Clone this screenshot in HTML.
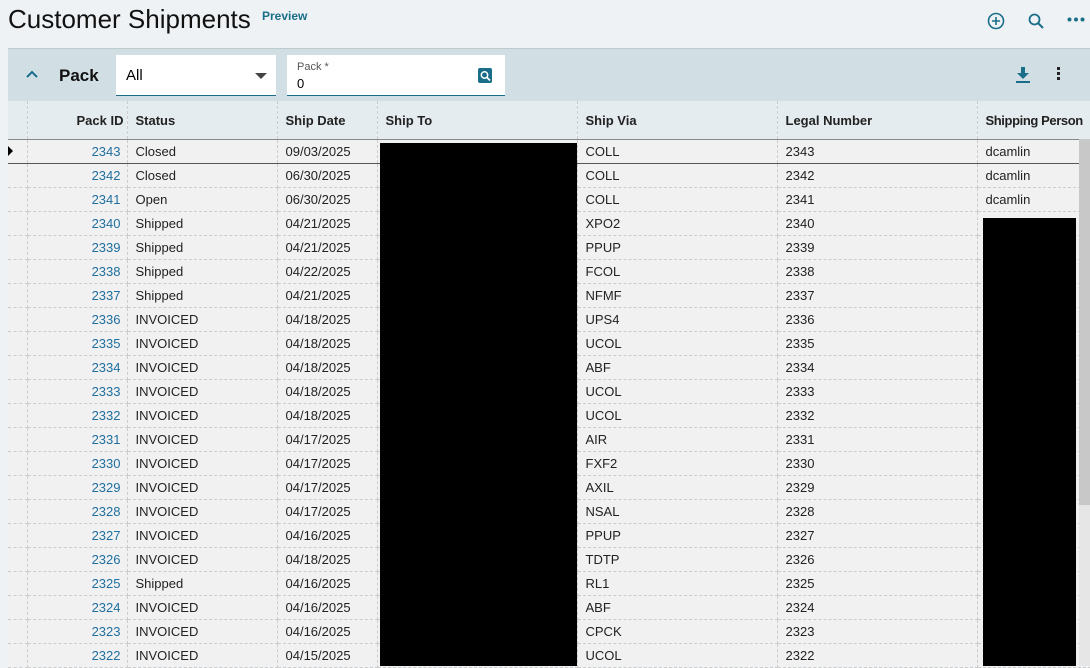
<!DOCTYPE html><html><head><style>
body{margin:0;width:1090px;height:666px;overflow:hidden;background:#eef2f5;font-family:"Liberation Sans",sans-serif;position:relative}
.t{position:absolute;left:8px;top:4px;font-size:26px;color:#111}
.pv{position:absolute;left:262px;top:9px;font-size:12px;font-weight:bold;color:#1a6e8a}
.panel{position:absolute;left:8px;top:48px;width:1082px;height:53px;background:#d1dee3;border-top:1px solid #bcc;}
.in{position:absolute;background:#fff;border-bottom:1px solid #1a6e8a}
table{position:absolute;left:8px;top:101px;width:1082px;border-collapse:collapse;font-size:13px;color:#222;table-layout:fixed}
td,th{height:23px;padding:0 4px 0 8px;white-space:nowrap;overflow:hidden;border-right:1px dashed #ccc;border-bottom:1px dashed #ccc;background:#f1f1f1}
th{height:38px;background:#e4ecef;text-align:left;font-weight:bold;border-bottom:1px solid #888}
td.id{color:#1f6fa0;text-align:right;padding-right:6px}
tr.sel td{border-top:1px solid #555;border-bottom:1px solid #555}
.blk{position:absolute;background:#000}
</style></head><body>
<div class="t">Customer Shipments</div><div class="pv">Preview</div>
<svg style="position:absolute;left:987px;top:12px" width="18" height="18" viewBox="0 0 18 18"><circle cx="9" cy="9" r="7.5" fill="none" stroke="#1a6e8a" stroke-width="1.6"/><path d="M9 5v8M5 9h8" stroke="#1a6e8a" stroke-width="1.6"/></svg>
<svg style="position:absolute;left:1027px;top:12px" width="18" height="18" viewBox="0 0 18 18"><circle cx="7.5" cy="7.5" r="5" fill="none" stroke="#1a6e8a" stroke-width="1.8"/><path d="M11 11l5 5" stroke="#1a6e8a" stroke-width="2"/></svg>
<svg style="position:absolute;left:1067px;top:17px" width="18" height="5"><circle cx="2.5" cy="2.5" r="2" fill="#1a6e8a"/><circle cx="9" cy="2.5" r="2" fill="#1a6e8a"/><circle cx="15.5" cy="2.5" r="2" fill="#1a6e8a"/></svg>
<div class="panel">
<svg style="position:absolute;left:18px;top:20px" width="12" height="10"><path d="M1 8l5-5 5 5" fill="none" stroke="#1a6e8a" stroke-width="2"/></svg>
<div style="position:absolute;left:51px;top:17px;font-size:17px;font-weight:bold;color:#111">Pack</div>
<div class="in" style="left:108px;top:6px;width:160px;height:40px"><span style="position:absolute;left:10px;top:12px;font-size:15px">All</span><svg style="position:absolute;left:139px;top:18px" width="12" height="6"><path d="M0 0h12L6 6z" fill="#444"/></svg></div>
<div class="in" style="left:279px;top:6px;width:218px;height:40px"><span style="position:absolute;left:10px;top:6px;font-size:11px;color:#555">Pack *</span><span style="position:absolute;left:10px;top:21px;font-size:13px">0</span><svg style="position:absolute;left:191px;top:13px" width="14" height="15"><rect width="14" height="15" rx="2" fill="#1a6e8a"/><circle cx="6.5" cy="7" r="3.2" fill="none" stroke="#fff" stroke-width="1.5"/><path d="M9 9.5l3 3" stroke="#fff" stroke-width="1.6"/></svg></div>
<svg style="position:absolute;left:1008px;top:18px" width="14" height="16"><path d="M5 0h4v6h4l-6 6-6-6h4z" fill="#1a6e8a"/><rect y="14" width="14" height="2" fill="#1a6e8a"/></svg>
<div style="position:absolute;left:1049px;top:18px;width:3px"><div style="width:3px;height:3px;background:#222;margin-bottom:2px"></div><div style="width:3px;height:3px;background:#222;margin-bottom:2px"></div><div style="width:3px;height:3px;background:#222"></div></div>
</div>
<table>
<colgroup><col style="width:19px"><col style="width:100px"><col style="width:150px"><col style="width:100px"><col style="width:200px"><col style="width:200px"><col style="width:200px"><col style="width:113px"></colgroup>
<tr><th style="padding:0"></th><th style="text-align:right;padding-right:3px">Pack ID</th><th>Status</th><th>Ship Date</th><th>Ship To</th><th>Ship Via</th><th>Legal Number</th><th style="padding-right:0;letter-spacing:-0.4px">Shipping Person</th></tr>
<tr class="sel"><td style="padding:0"><svg width="6" height="10"><path d="M0 0l5 5-5 5z" fill="#000"/></svg></td><td class="id">2343</td><td>Closed</td><td>09/03/2025</td><td></td><td>COLL</td><td>2343</td><td>dcamlin</td></tr>
<tr><td></td><td class="id">2342</td><td>Closed</td><td>06/30/2025</td><td></td><td>COLL</td><td>2342</td><td>dcamlin</td></tr>
<tr><td></td><td class="id">2341</td><td>Open</td><td>06/30/2025</td><td></td><td>COLL</td><td>2341</td><td>dcamlin</td></tr>
<tr><td></td><td class="id">2340</td><td>Shipped</td><td>04/21/2025</td><td></td><td>XPO2</td><td>2340</td><td></td></tr>
<tr><td></td><td class="id">2339</td><td>Shipped</td><td>04/21/2025</td><td></td><td>PPUP</td><td>2339</td><td></td></tr>
<tr><td></td><td class="id">2338</td><td>Shipped</td><td>04/22/2025</td><td></td><td>FCOL</td><td>2338</td><td></td></tr>
<tr><td></td><td class="id">2337</td><td>Shipped</td><td>04/21/2025</td><td></td><td>NFMF</td><td>2337</td><td></td></tr>
<tr><td></td><td class="id">2336</td><td>INVOICED</td><td>04/18/2025</td><td></td><td>UPS4</td><td>2336</td><td></td></tr>
<tr><td></td><td class="id">2335</td><td>INVOICED</td><td>04/18/2025</td><td></td><td>UCOL</td><td>2335</td><td></td></tr>
<tr><td></td><td class="id">2334</td><td>INVOICED</td><td>04/18/2025</td><td></td><td>ABF</td><td>2334</td><td></td></tr>
<tr><td></td><td class="id">2333</td><td>INVOICED</td><td>04/18/2025</td><td></td><td>UCOL</td><td>2333</td><td></td></tr>
<tr><td></td><td class="id">2332</td><td>INVOICED</td><td>04/18/2025</td><td></td><td>UCOL</td><td>2332</td><td></td></tr>
<tr><td></td><td class="id">2331</td><td>INVOICED</td><td>04/17/2025</td><td></td><td>AIR</td><td>2331</td><td></td></tr>
<tr><td></td><td class="id">2330</td><td>INVOICED</td><td>04/17/2025</td><td></td><td>FXF2</td><td>2330</td><td></td></tr>
<tr><td></td><td class="id">2329</td><td>INVOICED</td><td>04/17/2025</td><td></td><td>AXIL</td><td>2329</td><td></td></tr>
<tr><td></td><td class="id">2328</td><td>INVOICED</td><td>04/17/2025</td><td></td><td>NSAL</td><td>2328</td><td></td></tr>
<tr><td></td><td class="id">2327</td><td>INVOICED</td><td>04/16/2025</td><td></td><td>PPUP</td><td>2327</td><td></td></tr>
<tr><td></td><td class="id">2326</td><td>INVOICED</td><td>04/18/2025</td><td></td><td>TDTP</td><td>2326</td><td></td></tr>
<tr><td></td><td class="id">2325</td><td>Shipped</td><td>04/16/2025</td><td></td><td>RL1</td><td>2325</td><td></td></tr>
<tr><td></td><td class="id">2324</td><td>INVOICED</td><td>04/16/2025</td><td></td><td>ABF</td><td>2324</td><td></td></tr>
<tr><td></td><td class="id">2323</td><td>INVOICED</td><td>04/16/2025</td><td></td><td>CPCK</td><td>2323</td><td></td></tr>
<tr><td></td><td class="id">2322</td><td>INVOICED</td><td>04/15/2025</td><td></td><td>UCOL</td><td>2322</td><td></td></tr>
</table>
<div class="blk" style="left:380px;top:143px;width:197px;height:523px"></div>
<div class="blk" style="left:983px;top:218px;width:93px;height:448px"></div>
<div style="position:absolute;left:1079px;top:139px;width:11px;height:366px;background:#c8c8c8"></div>
<div style="position:absolute;left:1079px;top:505px;width:11px;height:161px;background:#e6e6e6"></div>
</body></html>
